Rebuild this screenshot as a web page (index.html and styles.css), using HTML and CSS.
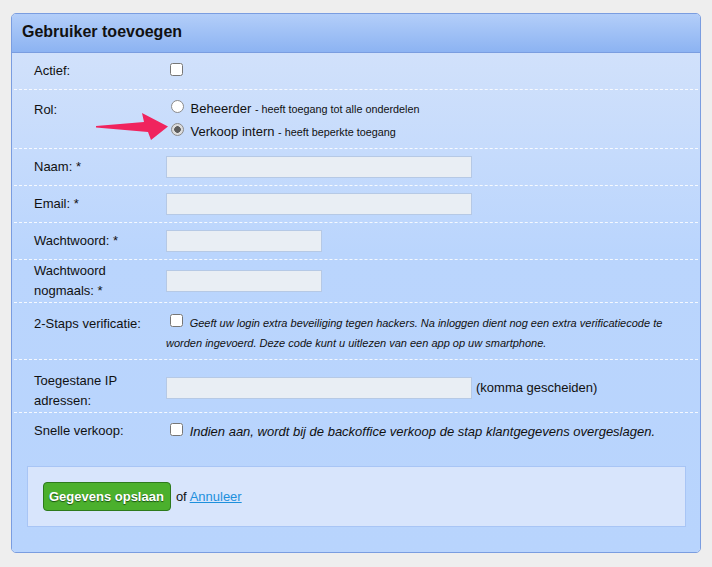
FILE: index.html
```html
<!DOCTYPE html>
<html lang="nl">
<head>
    <meta charset="UTF-8">
    <meta name="viewport" content="width=device-width, initial-scale=1.0">
    <title>Gebruiker toevoegen</title>
    <link rel="stylesheet" href="styles.css">
</head>
<body>
    <div class="panel">
        <div class="panel-head">Gebruiker toevoegen</div>

        <form class="panel-body">
            <div class="row">
                <div class="lbl">Actief:</div>
                <div class="val"><input type="checkbox"></div>
            </div>

            <!-- rol keuze, met pijl als aanwijzing -->
            <div class="row row-rol">
                <div class="lbl">Rol:</div>
                <div class="val">
                    <label class="opt"><input type="radio" name="rol"> Beheerder <small>- heeft toegang tot alle onderdelen</small></label>
                    <label class="opt"><input type="radio" name="rol" checked> Verkoop intern <small>- heeft beperkte toegang</small></label>
                </div>
                <svg class="pointer" width="76" height="32" viewBox="0 0 76 32">
                    <polygon points="1,15 49,11 47,2 73,15.5 56,29 53,21 1,16.5" fill="#f0245e"/>
                </svg>
            </div>

            <div class="row">
                <div class="lbl">Naam: *</div>
                <div class="val"><input type="text" class="txt"></div>
            </div>

            <div class="row">
                <div class="lbl">Email: *</div>
                <div class="val"><input type="text" class="txt"></div>
            </div>

            <div class="row">
                <div class="lbl">Wachtwoord: *</div>
                <div class="val"><input type="password" class="txt short"></div>
            </div>

            <div class="row">
                <div class="lbl">Wachtwoord nogmaals: *</div>
                <div class="val"><input type="password" class="txt short"></div>
            </div>

            <div class="row row-2fa">
                <div class="lbl">2-Staps verificatie:</div>
                <div class="val">
                    <input type="checkbox"> <span class="hint">Geeft uw login extra beveiliging tegen hackers. Na inloggen dient nog een extra verificatiecode te worden ingevoerd. Deze code kunt u uitlezen van een app op uw smartphone.</span>
                </div>
            </div>

            <div class="row row-ip">
                <div class="lbl">Toegestane IP adressen:</div>
                <div class="val ip">
                    <input type="text" class="txt">
                    <span>(komma gescheiden)</span>
                </div>
            </div>

            <div class="row last">
                <div class="lbl">Snelle verkoop:</div>
                <div class="val">
                    <input type="checkbox"> <em>Indien aan, wordt bij de backoffice verkoop de stap klantgegevens overgeslagen.</em>
                </div>
            </div>

            <div class="actions">
                <button type="submit" class="btn-save">Gegevens opslaan</button>
                <span>of <a href="#">Annuleer</a></span>
            </div>
        </form>
    </div>
</body>
</html>
```

FILE: styles.css
```css
/* page */
body {
    margin: 0;
    padding: 13px 11px;
    background-color: #eeeeee;
    font-family: "Liberation Sans", Arial, sans-serif;
    font-size: 13px;
    line-height: 20px;
    color: #111;
}

/* panel */
.panel {
    width: 690px;
    box-sizing: border-box;
    border: 1px solid #7a9de0;
    border-radius: 5px;
    overflow: hidden;
}
.panel-head {
    padding: 8px 10px 10px;
    font-size: 16px;
    font-weight: bold;
    line-height: 20px;
    color: #111;
    background: linear-gradient(#b3cef9, #8cb3f2);
    border-bottom: 1px solid #7a9de0;
}
.panel-body {
    margin: 0;
    padding: 0 2px 25px;
    background: linear-gradient(#d1e1fb, #bad5fd 200px, #b8d4fd);
}

/* form rows */
.row {
    position: relative;
    display: flex;
    align-items: center;
    min-height: 36px;
    border-bottom: 1px dashed rgba(255, 255, 255, 0.85);
}
.row.last { border-bottom: none; }
.lbl {
    width: 122px;
    flex-shrink: 0;
    padding: 1px 10px 1px 20px;
}
.val { flex: 1; padding-right: 20px; }

.row-rol, .row-2fa, .row-ip { align-items: flex-start; }
.row-rol .lbl { padding-top: 10px; }
.row-rol .val { padding: 7px 0 5px; }
.row-2fa .lbl { padding-top: 11px; }
.row-2fa .val { padding-top: 8px; padding-bottom: 6px; }
.row-ip .lbl { padding-top: 11px; padding-bottom: 1px; }
.row-ip .val { margin-top: 17px; }

.val.ip { display: flex; align-items: center; gap: 4px; }

.opt { display: block; line-height: 22px; }
.opt small { font-size: 10.8px; }

.hint { font-size: 11px; font-style: italic; }

/* inputs */
.txt {
    width: 306px;
    height: 22px;
    box-sizing: border-box;
    margin: 0;
    border: 1px solid #b6c9e5;
    background-color: #e9eef4;
}
.txt.short { width: 156px; }

input[type="radio"] {
    appearance: none;
    width: 13px;
    height: 13px;
    box-sizing: border-box;
    border: 1px solid #8a8a8a;
    border-radius: 50%;
    background-color: #fff;
    vertical-align: baseline;
}
input[type="radio"]:checked {
    background: radial-gradient(circle, #5c5c5c 0, #5c5c5c 3px, #dcdcdc 3.6px);
}

/* arrow overlay pointing at the selected role */
.pointer {
    position: absolute;
    left: 81px;
    top: 21px;
}

/* bottom buttons */
.actions {
    display: flex;
    align-items: center;
    margin: 17px 12px 0 13px;
    padding: 15px;
    border: 1px solid #a8c5f5;
    background-color: #d8e5fc;
}
.btn-save {
    margin-right: 5px;
    padding: 6px 6px 6px 5px;
    font-family: inherit;
    font-size: 13px;
    font-weight: bold;
    line-height: 15px;
    color: #fff;
    text-shadow: 0 1px 1px rgba(0, 40, 0, 0.7);
    background-color: #4bb02d;
    border: 1px solid #2d7a1c;
    border-radius: 4px;
    cursor: pointer;
}
.actions a { color: #1d90dc; }
```
